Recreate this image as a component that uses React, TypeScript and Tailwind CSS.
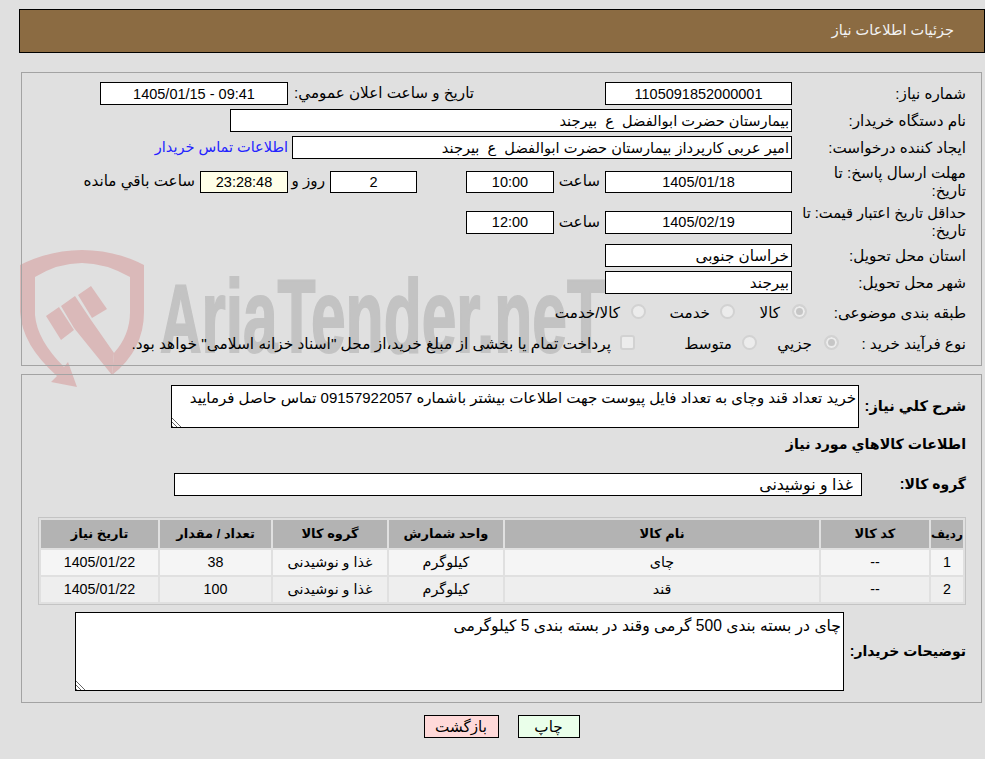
import React from "react";

const Box: React.FC<{ value: string; className?: string }> = ({ value, className }) => (
  <input
    readOnly
    value={value}
    className={`shrink-0 border border-black px-[2px] text-center text-[14.5px] outline-none ${className ?? "h-[23px] bg-white"}`}
  />
);

const Label: React.FC<{ children: React.ReactNode }> = ({ children }) => (
  <div className="ml-[8px] w-[166px] shrink-0 whitespace-nowrap leading-[18px]">{children}</div>
);

const Radio: React.FC<{ checked?: boolean; className?: string }> = ({ checked, className }) => (
  <input
    type="radio"
    disabled
    checked={!!checked}
    readOnly
    className={`h-[15px] w-[15px] shrink-0 appearance-none rounded-full border-2 border-[#d2d2d2] ${
      checked ? "bg-[#c6c6c6] shadow-[inset_0_0_0_2px_#ececec]" : "bg-[#ececec]"
    } ${className ?? ""}`}
  />
);

const rows = [
  ["1", "--", "چای", "کیلوگرم", "غذا و نوشیدنی", "38", "1405/01/22"],
  ["2", "--", "قند", "کیلوگرم", "غذا و نوشیدنی", "100", "1405/01/22"],
];

const heads = ["ردیف", "کد کالا", "نام کالا", "واحد شمارش", "گروه کالا", "تعداد / مقدار", "تاریخ نیاز"];

const resizer =
  "[&::-webkit-resizer]:bg-[linear-gradient(45deg,transparent_42%,white_42%),repeating-linear-gradient(45deg,#666_0,#666_1px,transparent_1px,transparent_3px)]";

const Watermark = () => (
  <svg className="absolute left-0 top-0 [direction:ltr]" width="985" height="759" viewBox="0 0 985 759" fill="none">
    <path
      fill="#dab9b9"
      d="M20 265 Q50 250 82 250 Q115 250 144 265 L144 312 Q144 350 112 375 L114 353 Q130 335 130 312 L130 277 Q105 263 82 263 Q58 263 35 277 L35 315 Q37 340 64 367 L68 362 L77 387 L51 382 L57 376 Q22 345 20 312 Z"
    />
    <path fill="#dab9b9" d="M46 316 L59 307 L74 330 L61 340 Z" />
    <path fill="#dab9b9" d="M61 306 L75 296 L91 320 L114 353 L112 375 L74 328 Z" />
    <path fill="#dab9b9" d="M78 295 L91 286 L107 309 L92 318 Z" />
    <text
      x="160"
      y="352"
      fontSize="104"
      fontWeight="700"
      fill="#c3c3c3"
      stroke="#c3c3c3"
      strokeWidth="2"
      textLength="445"
      lengthAdjust="spacingAndGlyphs"
      fontFamily="'Liberation Sans', sans-serif"
    >
      <tspan fontSize="96">A</tspan>riaTender.neT
    </text>
  </svg>
);

export default function App() {
  return (
    <div
      dir="rtl"
      className="relative h-[759px] overflow-hidden bg-[#e0e0e0] text-[15.2px] text-black [font-family:'Liberation_Sans','DejaVu_Sans',sans-serif]"
    >
      <Watermark />
      <div className="relative pt-[9px]">
        <div className="ml-[19px] flex h-[44px] items-center border border-black bg-[#8b6b42] pr-[30px] text-[14.5px] text-[#f2f2f2]">
          جزئیات اطلاعات نیاز
        </div>

        <div className="ml-[21px] mr-[3px] mt-[19px] flex h-[294px] flex-col gap-[4px] border border-[#a3a3a3] pr-[15px] pt-[9px]">
          <div className="flex h-[23px] items-center">
            <Label>شماره نیاز:</Label>
            <Box value="1105091852000001" className="h-[23px] w-[187px] bg-white" />
            <div className="mr-[131px] w-[186px] shrink-0 whitespace-nowrap">تاریخ و ساعت اعلان عمومي:</div>
            <Box value="09:41 - 1405/01/15" className="h-[23px] w-[188px] bg-white" />
          </div>
          <div className="flex h-[23px] items-center">
            <Label>نام دستگاه خریدار:</Label>
            <input readOnly value="بیمارستان حضرت ابوالفضل  ع  بیرجند" className="h-[23px] w-[562px] border border-black bg-white px-[2px] text-[14.6px] outline-none" />
          </div>
          <div className="flex h-[23px] items-center">
            <Label>ایجاد کننده درخواست:</Label>
            <input readOnly value="امیر عربی کارپرداز بیمارستان حضرت ابوالفضل  ع  بیرجند" className="h-[23px] w-[500px] border border-black bg-white px-[2px] text-[14.6px] outline-none" />
            <a className="mr-[4px] whitespace-nowrap text-[14.5px] text-[#2323ff]">اطلاعات تماس خریدار</a>
          </div>
          <div className="flex h-[37px] items-center">
            <Label>
              مهلت ارسال پاسخ: تا
              <br />
              تاریخ:
            </Label>
            <Box value="1405/01/18" className="h-[22px] w-[187px] bg-white" />
            <div className="w-[51px] shrink-0 pr-[5px]">ساعت</div>
            <Box value="10:00" className="h-[22px] w-[88px] bg-white" />
            <div className="w-[49px] shrink-0" />
            <Box value="2" className="h-[22px] w-[87px] bg-white" />
            <div className="w-[42px] shrink-0 whitespace-nowrap pr-[5px]">روز و</div>
            <Box value="23:28:48" className="h-[22px] w-[88px] bg-[#ffffe8]" />
            <div className="mr-[5px] whitespace-nowrap">ساعت باقي مانده</div>
          </div>
          <div className="flex h-[36px] items-center">
            <Label>
              <span className="text-[14.6px]">حداقل تاریخ اعتبار قیمت: تا</span>
              <br />
              تاریخ:
            </Label>
            <Box value="1405/02/19" className="h-[23px] w-[187px] bg-white" />
            <div className="w-[51px] shrink-0 pr-[5px]">ساعت</div>
            <Box value="12:00" className="h-[23px] w-[88px] bg-white" />
          </div>
          <div className="flex h-[23px] items-center">
            <Label>استان محل تحویل:</Label>
            <input readOnly value="خراسان جنوبی" className="h-[23px] w-[187px] border border-black bg-white px-[2px] outline-none" />
          </div>
          <div className="flex h-[23px] items-center">
            <Label>شهر محل تحویل:</Label>
            <input readOnly value="بیرجند" className="h-[23px] w-[187px] border border-black bg-white px-[2px] outline-none" />
          </div>
          <div className="flex h-[30px] items-center">
            <Label>طبقه بندی موضوعی:</Label>
            <Radio checked className="mb-[3px] mr-[-15px]" />
            <span className="mr-[12px] w-[20px]">کالا</span>
            <Radio className="mb-[3px] mr-[25px]" />
            <span className="mr-[10px] w-[40px] whitespace-nowrap">خدمت</span>
            <Radio className="mb-[3px] mr-[24px]" />
            <span className="mr-[11px] whitespace-nowrap">کالا/خدمت</span>
          </div>
          <div className="flex h-[24px] items-center">
            <Label>نوع فرآیند خرید :</Label>
            <Radio checked className="mb-[3px] mr-[-47px]" />
            <span className="mr-[12px] w-[35px] whitespace-nowrap">جزیي</span>
            <Radio className="mb-[3px] mr-[20px]" />
            <span className="mr-[10px] w-[45px] whitespace-nowrap">متوسط</span>
            <div className="mb-[3px] mr-[52px] h-[15px] w-[15px] shrink-0 rounded-[3px] border-2 border-[#d2d2d2] bg-[#ececec]" />
            <span className="mr-[9px] whitespace-nowrap text-[15.4px]">پرداخت تمام یا بخشی از مبلغ خرید،از محل "اسناد خزانه اسلامی" خواهد بود.</span>
          </div>
        </div>

        <div className="ml-[21px] mr-[3px] mt-[8px] h-[329px] border border-[#a3a3a3] pr-[15px] pt-[10px]">
          <div className="flex items-center">
            <div className="w-[107px] shrink-0 text-[14.6px] font-bold">شرح کلي نیاز:</div>
            <textarea
              readOnly
              value="خرید تعداد قند وچای به تعداد فایل پیوست جهت اطلاعات بیشتر باشماره 09157922057 تماس حاصل فرمایید"
              className={`block h-[43px] w-[688px] border border-black bg-white px-[2px] py-[1px] text-[15px] outline-none ${resizer}`}
            />
          </div>
          <div className="flex h-[30px] items-center pt-[3px] text-[14.2px] font-bold">اطلاعات کالاهاي مورد نیاز</div>
          <div className="mt-[15px] flex items-center">
            <div className="w-[104px] shrink-0 text-[14px] font-bold">گروه کالا:</div>
            <input readOnly value="غذا و نوشیدنی" className="h-[23px] w-[688px] border border-black bg-white px-[8px] text-[15.8px] outline-none" />
          </div>
          <table className="mt-[21px] w-[928px] table-fixed border-separate border-spacing-[2px] border border-[#c4c4c4] text-[14.3px]">
            <colgroup>
              <col className="w-[32px]" />
              <col className="w-[108px]" />
              <col className="w-[314px]" />
              <col className="w-[114px]" />
              <col className="w-[114px]" />
              <col className="w-[111px]" />
              <col className="w-[117px]" />
            </colgroup>
            <thead>
              <tr className="h-[28px] bg-[#b3b3b3] text-[13px]">
                {heads.map((h, i) => (
                  <th key={h} className={`whitespace-nowrap p-0 text-center font-bold ${i === 0 ? "text-[12px]" : ""}`}>
                    {h}
                  </th>
                ))}
              </tr>
            </thead>
            <tbody>
              {rows.map((r, i) => (
                <tr key={r[0]} className={`h-[25px] ${i === 0 ? "bg-[#f5f5f5]" : "bg-[#eeeeee]"}`}>
                  {r.map((c, j) => (
                    <td key={j} className="p-0 text-center">{c}</td>
                  ))}
                </tr>
              ))}
            </tbody>
          </table>
          <div className="mt-[7px] flex items-center">
            <div className="w-[122px] shrink-0 text-[14px] font-bold">توضیحات خریدار:</div>
            <textarea
              readOnly
              value="چای در بسته بندی 500 گرمی وقند در بسته بندی 5 کیلوگرمی"
              className={`block h-[79px] w-[769px] border border-black bg-white px-[2px] py-[1px] text-[15.6px] outline-none ${resizer}`}
            />
          </div>
        </div>

        <div className="mt-[12px] flex justify-center gap-[19px] pl-[18px]">
          <button className="h-[23px] w-[62px] border border-black bg-[#eaffea]">چاپ</button>
          <button className="h-[23px] w-[75px] border border-black bg-[#ffd9d9]">بازگشت</button>
        </div>
      </div>
    </div>
  );
}
